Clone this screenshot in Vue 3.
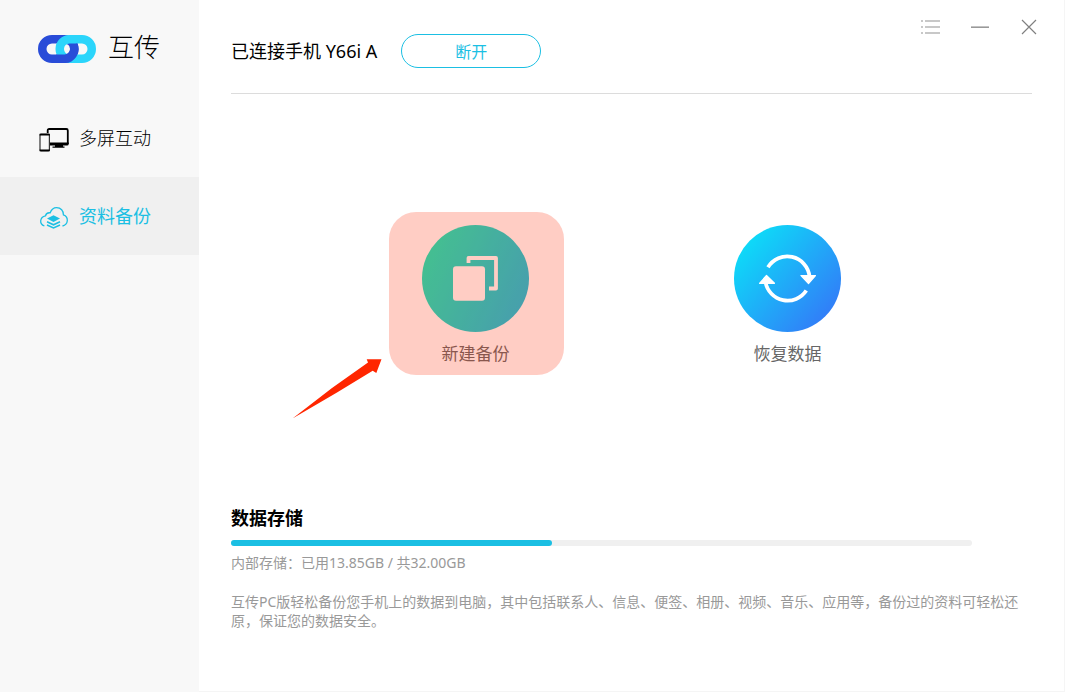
<script setup>
const used = 13.85
const total = 32
const percent = (used / total) * 100
</script>

<template>
  <div class="window">
    <aside class="sidebar">
      <div class="brand">
        <svg class="brand-logo" viewBox="0 0 58 28" fill="none" stroke-width="8.5" aria-hidden="true">
          <rect x="4.25" y="4.25" width="32" height="19.5" rx="9.75" stroke="#294cd8" />
          <rect x="21.75" y="4.25" width="32" height="19.5" rx="9.75" stroke="#2bd5fb" />
          <path d="M35.5 10A9.75 9.75 0 0 1 26.5 23.75H18" stroke="#294cd8" />
        </svg>
        <span class="brand-name">互传</span>
      </div>
      <nav class="nav">
        <a class="nav-item" href="#screens">
          <svg class="nav-icon" viewBox="0 0 30 24" fill="none" aria-hidden="true">
            <path d="M8.7 5V2.5Q8.7 1 10.2 1H27.3Q28.8 1 28.8 2.5V16" stroke="#000" stroke-width="1.8" />
            <path d="M11 14.5H29.7V16Q29.7 17.6 28 17.6H24V18.6H25.5V19.8H13.5V18.6H16V17.6H11Z" fill="#000" />
            <rect x="1" y="6" width="9.4" height="16.8" rx="1" stroke="#333" stroke-width="1.2" />
            <path d="M.6 6.6H10.8M.6 22.4H10.8" stroke="#000" stroke-width="1.6" />
          </svg>
          <span>多屏互动</span>
        </a>
        <a class="nav-item active" href="#backup" aria-current="page">
          <svg class="nav-icon" viewBox="0 0 30 24" fill="none" aria-hidden="true">
            <path d="M5.4 20C2.8 19 1.5 17 1.7 14.7C2 12 3.9 10.3 6.5 9.8C7 7.5 8.9 6.5 11.2 6.8C12.4 3.5 14.6 1.7 17.6 1.7C21.8 1.7 24.6 4.6 24.4 8.9C27 9.9 28.5 12 28.3 14.7C28 17.6 26.4 19.3 23.5 20" stroke="#1bbfe3" stroke-width="1.3" />
            <path d="M14.5 9.2L21 12.6L14.5 16L8 12.6Z" fill="#1bbfe3" />
            <path d="M8 15.8L14.5 18.8L21 15.8M8 19L14.5 22L21 19" stroke="#1bbfe3" stroke-width="1.5" />
          </svg>
          <span>资料备份</span>
        </a>
      </nav>
    </aside>

    <main class="main">
      <header class="header">
        <div class="connection">
          <span class="device">已连接手机 Y66i A</span>
          <button class="disconnect" type="button">断开</button>
        </div>
        <div class="controls">
          <button type="button" aria-label="菜单">
            <svg viewBox="0 0 20 20" aria-hidden="true">
              <path d="M4 4H19M4 10H19M4 16H19M0 4H2M0 10H2M0 16H2" stroke="#c8c8c8" stroke-width="2" />
            </svg>
          </button>
          <button type="button" aria-label="最小化">
            <svg viewBox="0 0 20 20" aria-hidden="true">
              <path d="M1 10.2H19" stroke="#999" stroke-width="1.6" />
            </svg>
          </button>
          <button type="button" aria-label="关闭">
            <svg viewBox="0 0 20 20" aria-hidden="true">
              <path d="M3 3L17 17M17 3L3 17" stroke="#808080" stroke-width="1.2" />
            </svg>
          </button>
        </div>
      </header>

      <section class="actions">
        <div class="action-wrap">
          <button class="action" type="button">
            <svg class="action-icon" viewBox="0 0 107 107" aria-hidden="true">
              <defs>
                <linearGradient id="backup-fill" x1="0.05" y1="0.3" x2="0.95" y2="0.7">
                  <stop offset="0" stop-color="#0cecbe" />
                  <stop offset="1" stop-color="#10c5e0" />
                </linearGradient>
              </defs>
              <circle cx="53.5" cy="53.5" r="53.5" fill="url(#backup-fill)" />
              <rect x="31" y="41.2" width="32" height="34.6" rx="3" fill="#fff" />
              <path d="M46.5 38V33H74V63.5H67" fill="none" stroke="#fff" stroke-width="3.8" stroke-linejoin="round" />
            </svg>
            <span>新建备份</span>
          </button>
          <span class="highlight"></span>
          <svg class="pointer" viewBox="0 0 90 60" aria-hidden="true">
            <path d="M.5 59.5L40 29L76 3.5L74.7 .2L89.5 .3L84.3 14L80.7 11.7L45 33.5Z" fill="#ff2600" />
          </svg>
        </div>
        <div class="action-wrap">
          <button class="action" type="button">
            <svg class="action-icon" viewBox="0 0 107 107" aria-hidden="true">
              <defs>
                <linearGradient id="restore-fill" x1="0.1" y1="0.15" x2="0.9" y2="0.85">
                  <stop offset="0" stop-color="#0ddcf8" />
                  <stop offset="1" stop-color="#327cf8" />
                </linearGradient>
              </defs>
              <circle cx="53.5" cy="53.5" r="53.5" fill="url(#restore-fill)" />
              <g fill="none" stroke="#fff" stroke-width="3.8">
                <path d="M34 42.3A22.4 22.4 0 0 1 75.5 51.5" />
                <path d="M72.3 65.5A22.4 22.4 0 0 1 31.5 57" />
              </g>
              <path d="M67 50.5H81.5L74.5 58.5Z M25.5 58.3H40.5L32.5 50.5Z" fill="#fff" stroke="#fff" stroke-width="1.2" stroke-linejoin="round" />
            </svg>
            <span>恢复数据</span>
          </button>
        </div>
      </section>

      <section class="storage">
        <h2>数据存储</h2>
        <div class="track" role="progressbar" aria-label="内部存储" :aria-valuenow="used" aria-valuemin="0" :aria-valuemax="total">
          <div class="fill" :style="{ width: percent + '%' }"></div>
        </div>
        <p class="usage">内部存储：已用{{ used.toFixed(2) }}GB / 共{{ total.toFixed(2) }}GB</p>
        <p class="note">互传PC版轻松备份您手机上的数据到电脑，其中包括联系人、信息、便签、相册、视频、音乐、应用等，备份过的资料可轻松还原，保证您的数据安全。</p>
      </section>
    </main>
  </div>
</template>

<style>
body {
  margin: 0;
}
</style>

<style scoped>
* {
  box-sizing: border-box;
}

.window {
  display: flex;
  min-height: 100vh;
  background: #fff;
  color: #000;
  font-family: "Noto Sans", "Noto Sans CJK SC", sans-serif;
  font-weight: 300;
}

button {
  padding: 0;
  border: 0;
  background: none;
  color: inherit;
  font: inherit;
  cursor: pointer;
}

svg {
  display: block;
}

.sidebar {
  flex: 0 0 199px;
  background: #f8f8f8;
}

.brand {
  display: flex;
  align-items: center;
  gap: 12px;
  height: 99px;
  padding: 0 0 5px 38px;
}

.brand-logo {
  width: 58px;
  height: 28px;
  margin-top: 4px;
}

.brand-name {
  font-size: 26px;
  line-height: 32px;
}

.nav-item {
  display: flex;
  align-items: center;
  gap: 10px;
  height: 78px;
  padding-left: 39px;
  color: #000;
  font-size: 18px;
  line-height: 24px;
  text-decoration: none;
}

.nav-item.active {
  background: #f0f0f0;
  color: #1bbfe3;
  font-weight: 400;
}

.nav-icon {
  width: 30px;
  height: 24px;
  margin-top: 4px;
}

.main {
  display: flex;
  flex: 1;
  flex-direction: column;
  min-width: 0;
  padding: 0 32px;
  border-right: 1px solid #f5f5f5;
  border-bottom: 1px solid #f5f5f5;
}

.header {
  display: flex;
  justify-content: space-between;
  height: 94px;
  border-bottom: 1px solid #dcdcdc;
}

.connection {
  display: flex;
  align-items: center;
  gap: 24px;
  height: 34px;
  margin-top: 34px;
  font-size: 18px;
}

.device {
  padding-bottom: 3px;
  font-weight: 400;
}

.disconnect {
  width: 140px;
  height: 34px;
  border: 1px solid #1bbfe3;
  border-radius: 17px;
  color: #1bbfe3;
  font-size: 16px;
  font-weight: 400;
}

.controls {
  display: flex;
  gap: 29px;
  height: 20px;
  margin: 17px -7px 0 0;
}

.controls button,
.controls svg {
  width: 20px;
  height: 20px;
}

.actions {
  display: flex;
  justify-content: center;
  gap: 205px;
  margin-top: 131px;
}

.action-wrap {
  position: relative;
}

.action {
  display: flex;
  flex-direction: column;
  align-items: center;
  gap: 10px;
  color: #666;
  font-size: 17px;
  font-weight: 400;
  line-height: 24px;
}

.action-icon {
  width: 107px;
  height: 107px;
}

.highlight {
  position: absolute;
  top: -13px;
  left: -33px;
  width: 175px;
  height: 163px;
  border-radius: 27px;
  background: rgba(255, 38, 0, 0.23);
  pointer-events: none;
}

.pointer {
  position: absolute;
  top: 134px;
  left: -130px;
  width: 90px;
  height: 60px;
}

.storage {
  margin-top: auto;
  padding: 32px 0 61px;
  color: #999;
  font-size: 14px;
  font-weight: 400;
}

.storage h2 {
  margin: 0 0 10px;
  color: #000;
  font-size: 18px;
  font-weight: 700;
  line-height: 24px;
}

.track {
  height: 6px;
  margin-right: 60px;
  border-radius: 3px;
  background: #f0f0f0;
}

.fill {
  height: 100%;
  border-radius: 3px;
  background: #1bbfe3;
}

.usage,
.note {
  margin: 0;
  line-height: 19px;
}

.usage {
  margin: 7px 0 20px;
}
</style>
